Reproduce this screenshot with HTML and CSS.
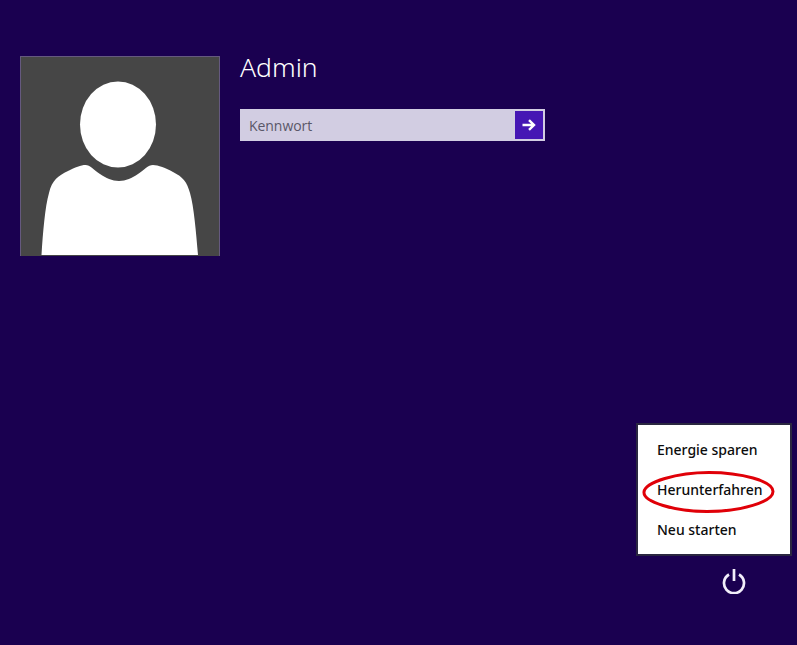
FILE: index.html
```html
<!DOCTYPE html>
<html lang="de">
<head>
<meta charset="utf-8">
<title>Anmeldung</title>
<link rel="stylesheet" href="styles.css">
</head>
<body>
<main class="screen">
  <section class="login">
    <div class="avatar">
      <svg viewBox="0 0 198 198" width="198" height="198" aria-hidden="true">
        <ellipse cx="97" cy="67.500" rx="38" ry="43" fill="#fff"/>
        <path fill="#fff" d="M20.500 198 C22 175 24 150 28 136 C31 123 37 119 47 114 C54 110.500 60 108 64.500 108 C69 108 73 113 79 117 C85 121 91 124 98 124 C105 124 111 121 117 117 C123 113 127 108 132 108 C137 108 145 111 152 115 C162 120 166 125 169 136 C173 150 175 175 177 198 Z"/>
      </svg>
    </div>
    <div class="credentials">
      <h1 class="name">Admin</h1>
      <div class="field">
        <span class="placeholder">Kennwort</span>
        <button class="submit" type="button" aria-label="Anmelden">
          <svg viewBox="0 0 14 12" width="14" height="12" aria-hidden="true">
            <path d="M0.500 6H11.500M7 1.200L12 6L7 10.800" fill="none" stroke="#fff" stroke-width="2.400"/>
          </svg>
        </button>
      </div>
    </div>
  </section>
  <section class="power">
    <div class="menu">
      <div class="item">Energie sparen</div>
      <div class="item">Herunterfahren</div>
      <div class="item">Neu starten</div>
      <svg class="mark" viewBox="0 0 136 46" width="136" height="46" aria-hidden="true">
        <path d="M3 23C4 13 36 3.500 68 3.500C100 3.500 132 12 132 22.500C132 33 100 42.500 66 42.500C34 42.500 2 33 3 23Z" fill="none" stroke="#e00008" stroke-width="3"/>
      </svg>
    </div>
    <div class="power-row">
      <svg viewBox="0 0 24 26" width="24" height="26" aria-hidden="true">
        <path d="M7 6.500A10 10 0 1 0 17 6.500" fill="none" stroke="#f2eefa" stroke-width="2.700"/>
        <path d="M12 1V13" fill="none" stroke="#f2eefa" stroke-width="2.700"/>
      </svg>
    </div>
  </section>
</main>
</body>
</html>
```
FILE: styles.css
```css
* { box-sizing: border-box; }
html, body { margin: 0; height: 100%; overflow: hidden; }
body { background: #1a0050; font-family: "Open Sans", "Noto Sans", sans-serif; }
.screen { height: 645px; display: flex; flex-direction: column; justify-content: space-between; }
.login { display: flex; gap: 20px; padding: 56px 0 0 20px; }
.avatar { width: 200px; height: 200px; background: #464646; border: 1px solid #65597f; border-bottom: 0; overflow: hidden; }
.avatar svg { display: block; }
.credentials { display: flex; flex-direction: column; }
.name { margin: 0; font-family: "Noto Sans", sans-serif; font-size: 26.500px; font-weight: 300; line-height: 22px; color: #fff; }
.field { margin-top: 31px; width: 305px; height: 32px; background: #d2cde2; display: flex; align-items: center; justify-content: space-between; padding: 2px 2px 2px 9px; }
.placeholder { font-size: 14px; letter-spacing: -0.050px; color: #5a5768; }
.submit { width: 28px; height: 28px; padding: 0; border: 0; background: #4617b4; display: flex; align-items: center; justify-content: center; }
.power { display: flex; flex-direction: column; align-items: flex-end; padding: 0 5px 51px 0; }
.menu { position: relative; width: 156px; height: 133px; background: #fff; border: 2px solid #2a2740; padding: 5px 0 0 19px; }
.item { height: 40px; font-family: "Noto Sans", sans-serif; font-size: 14px; font-weight: 500; line-height: 40px; color: #0c0c0c; white-space: nowrap; }
.mark { position: absolute; left: 3px; top: 44px; }
.power-row { width: 156px; margin-top: 12px; padding-left: 86px; height: 26px; }
.power-row svg { display: block; }
```
